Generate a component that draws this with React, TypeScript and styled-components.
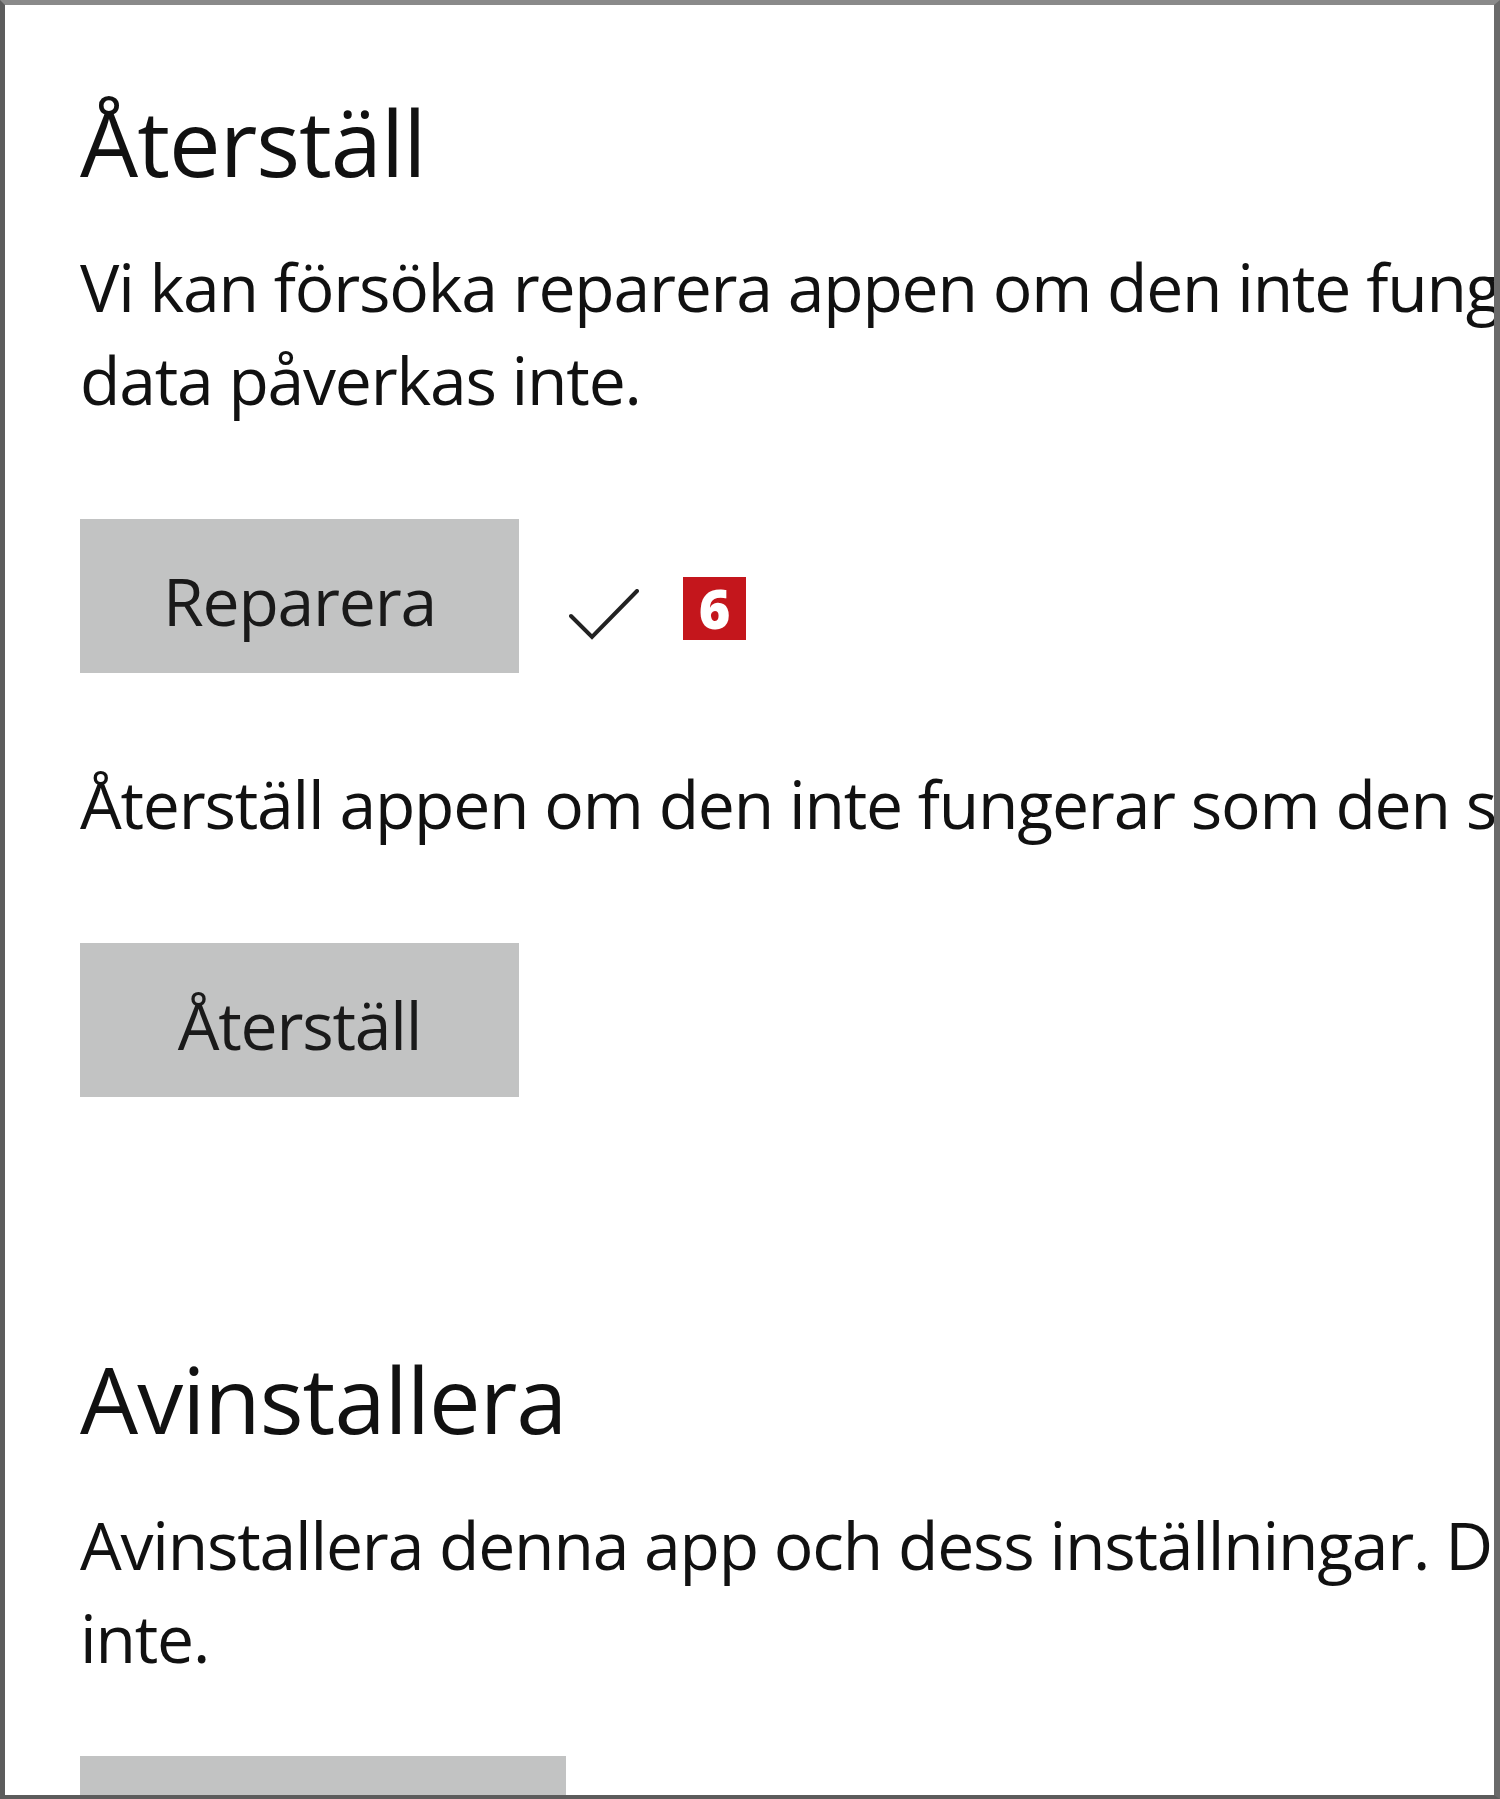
import React from "react";
import styled, { createGlobalStyle } from "styled-components";

const Global = createGlobalStyle`
  html, body { margin: 0; padding: 0; background: #ffffff; }
  body { font-family: "Open Sans", "Noto Sans", sans-serif; color: #111; }
`;

const Frame = styled.div`
  box-sizing: border-box;
  width: 1500px;
  height: 1799px;
  overflow: hidden;
  background: #fff;
  border-top: 5px solid #8a8a8a;
  border-left: 5px solid #5c5c5c;
  border-right: 6px solid #6a6a6a;
  border-bottom: 4px solid #5c5c5c;
`;

const Content = styled.div`
  width: 2100px;
  padding-left: 75px;
  display: flex;
  flex-direction: column;
`;

const Heading = styled.h2<{ $top: number }>`
  margin: ${(p) => p.$top}px 0 0 0;
  font-family: "Open Sans", "Noto Sans", sans-serif;
  font-weight: 400;
  font-size: 92px;
  line-height: 122px;
  color: #111;
  letter-spacing: -1px;
`;

const Body = styled.p<{ $top: number }>`
  margin: ${(p) => p.$top}px 0 0 0;
  font-size: 66px;
  line-height: 93px;
  color: #111;
  letter-spacing: -1.2px;
  white-space: nowrap;
`;

const ButtonRow = styled.div<{ $top: number }>`
  margin-top: ${(p) => p.$top}px;
  display: flex;
  align-items: center;
`;

const Button = styled.button<{ $w: number }>`
  box-sizing: border-box;
  width: ${(p) => p.$w}px;
  height: 154px;
  border: none;
  background: #c2c3c3;
  color: #1a1a1a;
  font-family: "Open Sans", "Noto Sans", sans-serif;
  font-size: 66px;
  letter-spacing: -1.2px;
  padding: 8px 0 0 0;
  display: flex;
  align-items: center;
  justify-content: center;
  flex-shrink: 0;
`;

const Status = styled.div`
  display: flex;
  align-items: center;
  margin-left: 50px;
  margin-top: 24px;
  gap: 44px;
`;

const Check = styled.svg`
  width: 70px;
  height: 52px;
  margin-top: 14px;
`;

const Badge = styled.div`
  width: 63px;
  height: 63px;
  background: #c4161c;
  color: #fff;
  font-family: "Open Sans", "Noto Sans", sans-serif;
  font-weight: 800;
  font-size: 54px;
  line-height: 63px;
  text-align: center;
`;

export default function App() {
  return (
    <>
      <Global />
      <Frame>
        <Content>
          <Heading $top={76}>Återställ</Heading>
          <Body $top={37}>
            Vi kan försöka reparera appen om den inte fungerar som den ska. Appens
            <br />
            data påverkas inte.
          </Body>
          <ButtonRow $top={93}>
            <Button $w={439}>Reparera</Button>
            <Status>
              <Check viewBox="0 0 70 52">
                <polyline
                  points="2,27 23,48 68,2"
                  fill="none"
                  stroke="#222"
                  strokeWidth="4"
                  strokeLinecap="round"
                  strokeLinejoin="miter"
                />
              </Check>
              <Badge>6</Badge>
            </Status>
          </ButtonRow>
          <Body $top={84}>
            Återställ appen om den inte fungerar som den ska. Appens data tas bort.
          </Body>
          <ButtonRow $top={93}>
            <Button $w={439}>Återställ</Button>
          </ButtonRow>
          <Heading $top={241}>Avinstallera</Heading>
          <Body $top={38}>
            Avinstallera denna app och dess inställningar. Dokumenten påverkas
            <br />
            inte.
          </Body>
          <ButtonRow $top={72}>
            <Button $w={486}>Avinstallera</Button>
          </ButtonRow>
        </Content>
      </Frame>
    </>
  );
}
